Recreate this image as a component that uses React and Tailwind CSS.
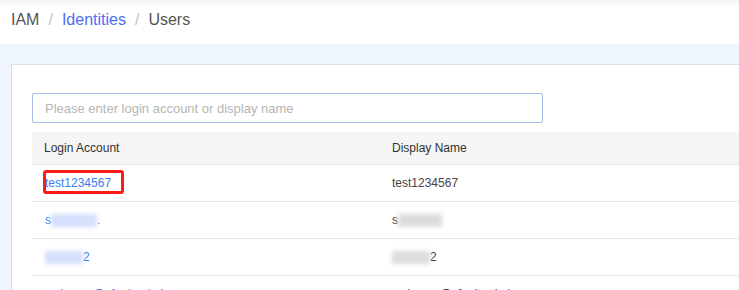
import React from "react";

const rows = [
  { login: "test1234567", display: "test1234567", marked: true },
  { blurred: 1 },
  { blurred: 2 },
  { login: "welcome Default admin", display: "welcome Default admin" },
];

function Blur({ className }) {
  return <span className={"inline-block blur-[2px] " + className}></span>;
}

function App() {
  return (
    <div
      className="h-screen overflow-hidden bg-[#eef5fd]"
      style={{ fontFamily: '"Liberation Sans", Arial, sans-serif' }}
    >
      {/* Breadcrumb */}
      <div className="h-11 flex items-center pb-1 px-[11px] bg-[linear-gradient(to_bottom,#f2f2f2,#ffffff_6px)] text-[16px]">
        <span className="text-[#555]">IAM</span>
        <span className="mx-[9px] text-[#c0c4cc]">/</span>
        <span className="text-[#4e6ef2]">Identities</span>
        <span className="mx-[9px] text-[#c0c4cc]">/</span>
        <span className="text-[#555]">Users</span>
      </div>

      {/* Card */}
      <div className="pt-5 pl-[11px]">
        <div className="w-[780px] h-[300px] bg-white border border-[#d8dfeb] pt-7 pl-5">
          <input
            type="text"
            placeholder="Please enter login account or display name"
            className="w-[511px] h-[30px] border border-[#a8bce8] rounded-[2px] px-3 text-[13px] text-[#333] placeholder:text-[#b5b5b5] outline-none"
          />

          <div className="mt-[9px] w-[760px] text-[12px]">
            <div className="flex h-[33px] items-center bg-[#f5f5f5] border-b border-[#e6e6e6] text-[#333]">
              <div className="w-[348px] pl-3">Login Account</div>
              <div className="pl-3">Display Name</div>
            </div>

            {rows.map((row, i) => (
              <div
                key={i}
                className="flex h-[37px] items-center border-b border-[#e6e6e6]"
              >
                <div className="w-[348px] pl-[13px] text-[#3b7cf1] flex items-center">
                  {row.blurred === 1 && (
                    <>
                      <span>s</span>
                      <Blur className="w-[46px] h-[13px] bg-[#d6dffc]" />
                      <span>.</span>
                    </>
                  )}
                  {row.blurred === 2 && (
                    <>
                      <Blur className="w-[38px] h-[13px] bg-[#d6dffc]" />
                      <span>2</span>
                    </>
                  )}
                  {!row.blurred && (
                    <span className="relative">
                      {row.login}
                      {row.marked && (
                        <span className="absolute left-[-2px] top-[-4px] w-[81px] h-[24px] border-[3px] border-[#ff1a1a] rounded-[3px]"></span>
                      )}
                    </span>
                  )}
                </div>
                <div className="pl-3 text-[#444] flex items-center">
                  {row.blurred === 1 && (
                    <>
                      <span>s</span>
                      <Blur className="w-[44px] h-[13px] bg-[#dedbdb]" />
                    </>
                  )}
                  {row.blurred === 2 && (
                    <>
                      <Blur className="w-[38px] h-[13px] bg-[#dedcdc]" />
                      <span>2</span>
                    </>
                  )}
                  {!row.blurred && <span>{row.display}</span>}
                </div>
              </div>
            ))}
          </div>
        </div>
      </div>
    </div>
  );
}

export default App;
